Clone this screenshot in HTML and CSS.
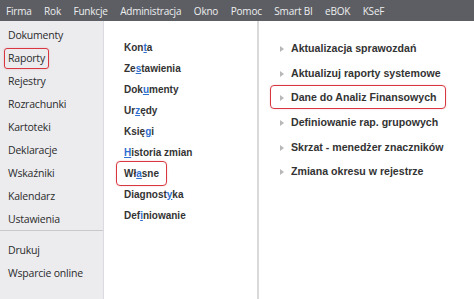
FILE: index.html
```html
<!DOCTYPE html>
<html lang="pl">
<head>
    <meta charset="UTF-8">
    <meta name="viewport" content="width=device-width, initial-scale=1.0">
    <title>Raporty</title>
    <link rel="stylesheet" href="styles.css">
</head>
<body>
<div id="menubar">
    <span class="menu">Firma</span>
    <span class="menu">Rok</span>
    <span class="menu">Funkcje</span>
    <span class="menu">Administracja</span>
    <span class="menu">Okno</span>
    <span class="menu">Pomoc</span>
    <span class="menu">Smart BI</span>
    <span class="menu">eBOK</span>
    <span class="menu">KSeF</span>
</div>
<div id="main">
    <div id="sidebar">
        <div class="side"><span>Dokumenty</span></div>
        <div class="side"><span class="marked">Raporty</span></div>
        <div class="side"><span>Rejestry</span></div>
        <div class="side"><span>Rozrachunki</span></div>
        <div class="side"><span>Kartoteki</span></div>
        <div class="side"><span>Deklaracje</span></div>
        <div class="side"><span>Wskaźniki</span></div>
        <div class="side"><span>Kalendarz</span></div>
        <div class="side"><span>Ustawienia</span></div>
        <hr class="sep">
        <div class="side"><span>Drukuj</span></div>
        <div class="side"><span>Wsparcie online</span></div>
    </div>
    <div id="groups">
        <div class="group"><span>Kon<u class="key">t</u>a</span></div>
        <div class="group"><span>Ze<u class="key">s</u>tawienia</span></div>
        <div class="group"><span>Dok<u class="key">u</u>menty</span></div>
        <div class="group"><span>Ur<u class="key">z</u>ędy</span></div>
        <div class="group"><span>Księ<u class="key">g</u>i</span></div>
        <div class="group"><span><u class="key">H</u>istoria zmian</span></div>
        <div class="group"><span class="marked">Wł<u class="key">a</u>sne</span></div>
        <div class="group"><span>Diagnost<u class="key">y</u>ka</span></div>
        <div class="group"><span>Def<u class="key">i</u>niowanie</span></div>
    </div>
    <div id="reports">
        <div class="report"><span><i class="arrow"></i>Aktualizacja sprawozdań</span></div>
        <div class="report"><span><i class="arrow"></i>Aktualizuj raporty systemowe</span></div>
        <div class="report"><span class="marked"><i class="arrow"></i>Dane do Analiz Finansowych</span></div>
        <div class="report"><span><i class="arrow"></i>Definiowanie rap. grupowych</span></div>
        <div class="report"><span><i class="arrow"></i>Skrzat - menedżer znaczników</span></div>
        <div class="report"><span><i class="arrow"></i>Zmiana okresu w rejestrze</span></div>
    </div>
</div>
</body>
</html>
```

FILE: styles.css
```css
html,
body {
    margin: 0;
    height: 100%;
    background: #fff;
}

body {
    display: flex;
    flex-direction: column;
    font-family: "Open Sans", "Noto Sans", sans-serif;
    overflow: hidden;
}

#menubar {
    display: flex;
    align-items: center;
    gap: 12.5px;
    height: 21px;
    padding-left: 6px;
    background: #5c5e64;
    color: #eeeeef;
    font-size: 10px;
    letter-spacing: -0.2px;
    flex: none;
}

#main {
    display: grid;
    grid-template-columns: 104px 155px 1fr;
    flex: 1;
}

/* lewa kolumna */
#sidebar {
    background: #ececef;
    border-right: 1px solid #dcdce0;
    padding-top: 2px;
    font-size: 10.5px;
    color: #2b2b2b;
    letter-spacing: -0.2px;
}
.side {
    height: 23px;
    line-height: 23px;
    padding-left: 4px;
}
.side span {
    display: inline-block;
    line-height: 19px;
    padding: 0 3px;
    border: 1px solid transparent;
    border-radius: 3px;
    vertical-align: middle;
}
.sep {
    margin: 0 0 7px;
    border: 0;
    border-top: 1px solid #c9c9cc;
}

/* srodkowa kolumna */
#groups {
    padding-top: 15px;
    padding-left: 20px;
    border-right: 2px solid #dadada;
    font-family: "Liberation Sans", Arial, sans-serif;
    font-weight: bold;
    font-size: 10px;
    color: #333;
}
.group {
    height: 21px;
    line-height: 21px;
}
.group span {
    display: inline-block;
    line-height: 21px;
    vertical-align: middle;
}
.group .marked {
    line-height: 21px;
    padding: 1px 7px;
    margin: -2px -8px;
}
.key {
    color: #2e6fd0;
    text-decoration: underline;
}

/* prawa kolumna */
#reports {
    padding-top: 14px;
    padding-left: 11px;
    font-family: "Liberation Sans", Arial, sans-serif;
    font-weight: bold;
    font-size: 10.6px;
    color: #333;
}
.report {
    height: 24.6px;
    line-height: 24.6px;
}
.report span {
    display: inline-block;
    line-height: 22px;
    padding: 0 8px 0 9px;
    border: 1px solid transparent;
    border-radius: 4px;
    vertical-align: middle;
}
.arrow {
    display: inline-block;
    width: 0;
    height: 0;
    margin-right: 7px;
    border-top: 3.5px solid transparent;
    border-bottom: 3.5px solid transparent;
    border-left: 4px solid #b8b8b8;
    vertical-align: 0;
}

.marked {
    border: 1.5px solid #d9373f !important;
    border-radius: 4px;
    box-shadow: 0 0 2px rgba(217, 55, 63, 0.25);
}
```
